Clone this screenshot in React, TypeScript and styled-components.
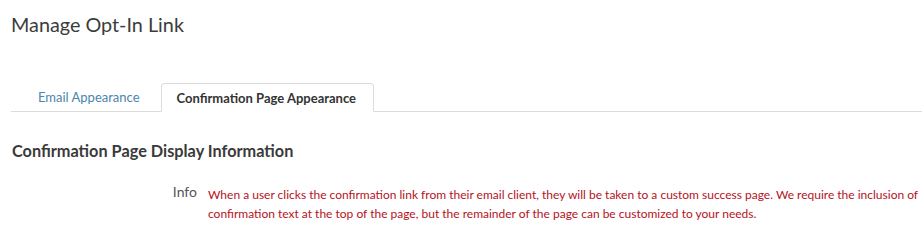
import React, { useState } from 'react';
import styled, { createGlobalStyle } from 'styled-components';

const GlobalStyle = createGlobalStyle`
  html, body {
    margin: 0;
    padding: 0;
    background: #fff;
  }
  body {
    font-family: Lato, "Open Sans", Arial, sans-serif;
    color: #333;
  }
`;

const Page = styled.div`
  padding: 10px 0 0 11px;
`;

const Title = styled.h1`
  margin: 0;
  font-size: 19.8px;
  font-weight: 400;
  line-height: 28px;
  color: #3c3c3c;
`;

const TabBar = styled.div`
  display: flex;
  align-items: flex-end;
  margin-top: 45px;
  border-bottom: 1px solid #dcdcdc;
  height: 28px;
`;

const Tab = styled.div<{ active?: boolean }>`
  box-sizing: border-box;
  height: ${(p) => (p.active ? '29px' : '28px')};
  margin-bottom: ${(p) => (p.active ? '-1px' : '0')};
  padding: 0 ${(p) => (p.active ? '17px' : '15px')} 0 ${(p) => (p.active ? '15px' : '26px')};
  display: flex;
  align-items: center;
  font-size: 13px;
  cursor: pointer;
  font-weight: ${(p) => (p.active ? 700 : 400)};
  color: ${(p) => (p.active ? '#333' : '#4a86ad')};
  background: #fff;
  border: 1px solid ${(p) => (p.active ? '#dcdcdc' : 'transparent')};
  border-bottom-color: ${(p) => (p.active ? '#fff' : 'transparent')};
  border-radius: 4px 4px 0 0;
  margin-right: 5px;
`;

const SectionTitle = styled.h2`
  margin: 28px 0 0 1px;
  font-size: 16.3px;
  font-weight: 700;
  line-height: 22px;
  color: #3a3a3a;
`;

const FieldRow = styled.div`
  display: grid;
  grid-template-columns: 186px 1fr;
  column-gap: 11px;
  margin-top: 21px;
`;

const Label = styled.div`
  text-align: right;
  font-size: 14px;
  line-height: 18px;
  color: #555;
`;

const Notice = styled.div`
  font-size: 12px;
  line-height: 19px;
  color: #b5121b;
  padding-top: 2px;
`;

export default function App() {
  const [tab, setTab] = useState(1);
  const tabs = ['Email Appearance', 'Confirmation Page Appearance'];
  return (
    <Page>
      <GlobalStyle />
      <Title>Manage Opt-In Link</Title>
      <TabBar>
        {tabs.map((t, i) => (
          <Tab key={t} active={tab === i} onClick={() => setTab(i)}>
            {t}
          </Tab>
        ))}
      </TabBar>
      <SectionTitle>Confirmation Page Display Information</SectionTitle>
      <FieldRow>
        <Label>Info</Label>
        <Notice>
          When a user clicks the confirmation link from their email client, they will be taken to a
          custom success page. We require the inclusion of confirmation text at the top of the page,
          but the remainder of the page can be customized to your needs.
        </Notice>
      </FieldRow>
    </Page>
  );
}
